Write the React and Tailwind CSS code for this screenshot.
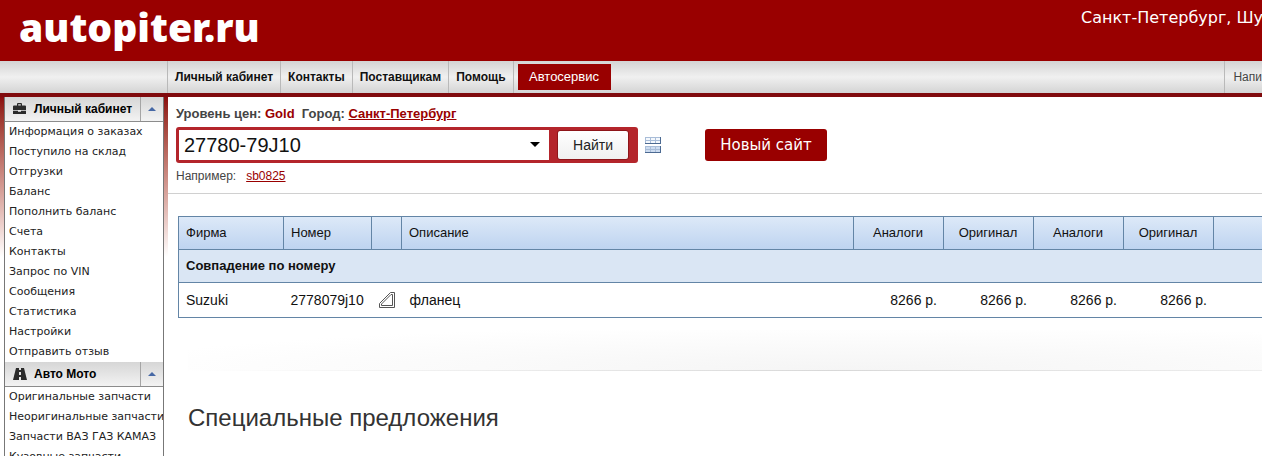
import { useState } from 'react';

const NAV_ITEMS = ['Личный кабинет', 'Контакты', 'Поставщикам', 'Помощь'];

const CABINET_LINKS = [
  'Информация о заказах',
  'Поступило на склад',
  'Отгрузки',
  'Баланс',
  'Пополнить баланс',
  'Счета',
  'Контакты',
  'Запрос по VIN',
  'Сообщения',
  'Статистика',
  'Настройки',
  'Отправить отзыв',
];

const AUTO_LINKS = [
  'Оригинальные запчасти',
  'Неоригинальные запчасти',
  'Запчасти ВАЗ ГАЗ КАМАЗ',
  'Кузовные запчасти',
];

const PRICE_COLUMNS = ['Аналоги', 'Оригинал', 'Аналоги', 'Оригинал'];

const ROWS = [
  { brand: 'Suzuki', number: '2778079j10', name: 'фланец', prices: ['8266 р.', '8266 р.', '8266 р.', '8266 р.'] },
];

/* ── Icons ── */
function BriefcaseIcon() {
  return (
    <svg width="13" height="12" viewBox="0 0 13 12" fill="#2b2b2b" aria-hidden="true">
      <path d="M4 2.5V1q0-1 1-1h3q1 0 1 1v1.500h3q1 0 1 1V7H0V3.500q0-1 1-1zm1.200 0h2.600V1.200H5.200z" fillRule="evenodd" />
      <path d="M0 7.800h5v1h3v-1h5V11H0z" />
    </svg>
  );
}

function RoadIcon() {
  return (
    <svg width="14" height="12" viewBox="0 0 14 12" fill="#2b2b2b" aria-hidden="true">
      <path d="M3 0h3v2h2V0h3l3 12H8V9H6v3H0L3 0zm3 4v3h2V4H6z" fillRule="evenodd" />
    </svg>
  );
}

function GridIcon() {
  return (
    <svg width="16" height="16" viewBox="0 0 16 16" shapeRendering="crispEdges" aria-hidden="true">
      <path d="M0 0h16v7H0zM0 9h16v7H0z" fill="#a9bdd8" />
      <path d="M1 1h4v2H1zM6 1h4v2H6zM11 1h4v2h-4zM1 4h4v2H1zM6 4h4v2H6zM11 4h4v2h-4z" fill="#f4f8fd" />
      <path d="M1 10h4v2H1zM6 10h4v2H6zM11 10h4v2h-4zM1 13h4v2H1zM6 13h4v2H6zM11 13h4v2h-4z" fill="#cddcf0" />
      <path d="M0 6h16v1H0zM0 15h16v1H0zM15 0h1v7h-1zM15 9h1v7h-1z" fill="#4c6a92" />
    </svg>
  );
}

function PartIcon() {
  return (
    <svg width="16" height="16" viewBox="0 0 16 16" fill="none" stroke="#555" aria-hidden="true">
      <path d="M11.5.5h4v15H.5v-4z" />
      <path d="M12 2.500h1.500v11h-11V12z" />
    </svg>
  );
}

function SidebarSection({ title, icon, links }) {
  const [open, setOpen] = useState(true);

  return (
    <section>
      <div className="flex h-[25px] border-b border-[#8c8c8c] bg-linear-to-b from-[#d6d6d6] to-[#f3f3f3]">
        <h2 className="flex flex-1 items-center pl-2 text-xs font-bold text-black">
          <span className="flex w-[21px]">{icon}</span>
          {title}
        </h2>
        <button
          type="button"
          aria-label={title}
          aria-expanded={open}
          onClick={() => setOpen(!open)}
          className="flex w-[23px] items-center justify-center border-l border-[#a5a5a5]"
        >
          <svg width="8" height="4" viewBox="0 0 8 4" aria-hidden="true">
            <path d="M4 0l4 4H0z" fill="#4668a5" />
          </svg>
        </button>
      </div>
      {open && (
        <ul className="bg-white font-['DejaVu_Sans',sans-serif] text-[11px] leading-5 whitespace-nowrap">
          {links.map((label) => (
            <li key={label} className="pl-1">
              <a href="#" className="text-[#222]">{label}</a>
            </li>
          ))}
        </ul>
      )}
    </section>
  );
}

function SearchForm() {
  const [query, setQuery] = useState('27780-79J10');

  return (
    <div className="border-b border-[#d0d0d0] px-2 pt-2 pb-2 text-xs text-[#444]">
      <p className="text-[13px] leading-[18px] font-bold">
        Уровень цен: <span className="text-[#990000]">Gold</span>&nbsp; Город:{' '}
        <a href="#" className="text-[#990000] underline">Санкт-Петербург</a>
      </p>

      <div className="mt-1 flex items-center">
        <form
          onSubmit={(e) => e.preventDefault()}
          className="flex h-9 w-[462px] items-stretch rounded-[3px] bg-[#b4252b] p-[3px]"
        >
          <div className="relative flex flex-1 bg-white">
            <input
              type="text"
              aria-label="Номер детали"
              value={query}
              onChange={(e) => setQuery(e.target.value)}
              className="w-full pl-[5px] text-xl text-[#111] outline-none"
            />
            <svg className="absolute top-3 right-[9px]" width="10" height="5" viewBox="0 0 10 5" aria-hidden="true">
              <path d="M0 0h10L5 5z" fill="#000" />
            </svg>
          </div>
          <button
            type="submit"
            className="mr-1.5 ml-2 w-[72px] rounded-[3px] border border-[#8e1519] bg-linear-to-b from-white to-[#f0f0f0] text-sm text-[#222]"
          >
            Найти
          </button>
        </form>
        <button type="button" aria-label="Список номеров" className="ml-[7px]">
          <GridIcon />
        </button>
        <button
          type="button"
          className="ml-11 h-8 w-[122px] rounded-[3px] bg-[#990000] pt-0.5 font-['DejaVu_Sans',sans-serif] text-[15px] text-white"
        >
          Новый сайт
        </button>
      </div>

      <p className="mt-1 flex gap-2.5 leading-[18px]">
        Например: <a href="#" className="text-[#990000] underline">sb0825</a>
      </p>
    </div>
  );
}

function ResultsTable() {
  return (
    <table className="w-full table-fixed border-collapse border border-r-0 border-[#6385a6] text-left text-[#111]">
      <colgroup>
        <col className="w-[105px]" />
        <col className="w-[88px]" />
        <col className="w-[30px]" />
        <col />
        <col className="w-[90px]" />
        <col className="w-[90px]" />
        <col className="w-[90px]" />
        <col className="w-[90px]" />
        <col className="w-[49px]" />
      </colgroup>
      <thead>
        <tr className="h-[33px] bg-linear-to-b from-[#dde9f8] to-[#bdd3f0] text-[13px]">
          <th className="border border-[#6385a6] px-[7px] font-normal">Фирма</th>
          <th className="border border-[#6385a6] px-[7px] font-normal">Номер</th>
          <th className="border border-[#6385a6]" />
          <th className="border border-[#6385a6] px-[7px] font-normal">Описание</th>
          {PRICE_COLUMNS.map((label, i) => (
            <th key={i} className="border border-[#6385a6] text-center font-normal">{label}</th>
          ))}
          <th className="border border-r-0 border-[#6385a6]" />
        </tr>
      </thead>
      <tbody>
        <tr className="h-[33px] border-b border-[#6385a6] bg-[#dae6f4] text-[13px]">
          <th colSpan={9} className="px-[7px] font-bold">Совпадение по номеру</th>
        </tr>
        {ROWS.map((row) => (
          <tr key={row.number} className="h-[35px] text-sm">
            <td className="px-[7px]">{row.brand}</td>
            <td className="pl-[7px]">{row.number}</td>
            <td className="pl-[7px]"><PartIcon /></td>
            <td className="px-2">{row.name}</td>
            {row.prices.map((price, i) => (
              <td key={i} className="pr-1.5 text-right">{price}</td>
            ))}
            <td />
          </tr>
        ))}
      </tbody>
    </table>
  );
}

export default function App() {
  return (
    <div className="flex h-screen flex-col overflow-hidden bg-white font-['Liberation_Sans',Arial,sans-serif]">

      {/* Header */}
      <header className="flex h-[61px] shrink-0 justify-between bg-[#990000] text-white">
        <a href="#" className="pl-[19px] font-['Noto_Sans',sans-serif] text-[39px] leading-[53px] font-black">
          autopiter.ru
        </a>
        <p className="w-[181px] overflow-hidden pt-1.5 font-['DejaVu_Sans',sans-serif] text-base whitespace-nowrap">
          Санкт-Петербург, Шу
        </p>
      </header>

      {/* Main menu */}
      <nav className="flex h-9 shrink-0 items-stretch border-b-4 border-[#800a0d] bg-linear-to-b from-[#d4d4d4] via-[#f0f0f0] to-[#d4d4d4] pl-[167px] text-xs">
        {NAV_ITEMS.map((label) => (
          <a key={label} href="#" className="flex items-center border-l border-[#b9b9b9] px-[7px] font-bold text-[#111]">
            {label}
          </a>
        ))}
        <div className="flex items-center border-l border-[#b9b9b9] pl-1">
          <a href="#" className="flex h-[26px] w-[93px] items-center justify-center bg-[#990000] text-[13px] text-white">
            Автосервис
          </a>
        </div>
        <a href="#" className="ml-auto flex items-center border-l border-[#b9b9b9] pl-2 text-[#444]">
          Напи
        </a>
      </nav>

      <div className="flex min-h-0 flex-1">
        {/* Sidebar */}
        <div className="w-[168px] shrink-0 bg-linear-to-b from-[#8b0a0d] to-white to-[160px] pr-1 pl-1">
          <aside className="h-full overflow-hidden border-x border-[#777] bg-white">
            <SidebarSection title="Личный кабинет" icon={<BriefcaseIcon />} links={CABINET_LINKS} />
            <SidebarSection title="Авто Мото" icon={<RoadIcon />} links={AUTO_LINKS} />
          </aside>
        </div>

        {/* Content */}
        <main className="min-w-0 flex-1">
          <SearchForm />
          <div className="pt-[22px] pl-2.5">
            <ResultsTable />
          </div>
          <div className="mt-3 ml-5 h-10 bg-[radial-gradient(ellipse_at_62%_100%,#f5f5f5,#ffffff_80%)]" />
          <div className="ml-5 h-px bg-linear-to-r from-white via-[#d8d8d8] via-60% to-[#eeeeee]" />
          <h1 className="mt-[31px] pl-5 text-2xl text-[#333]">Специальные предложения</h1>
        </main>
      </div>
    </div>
  );
}
